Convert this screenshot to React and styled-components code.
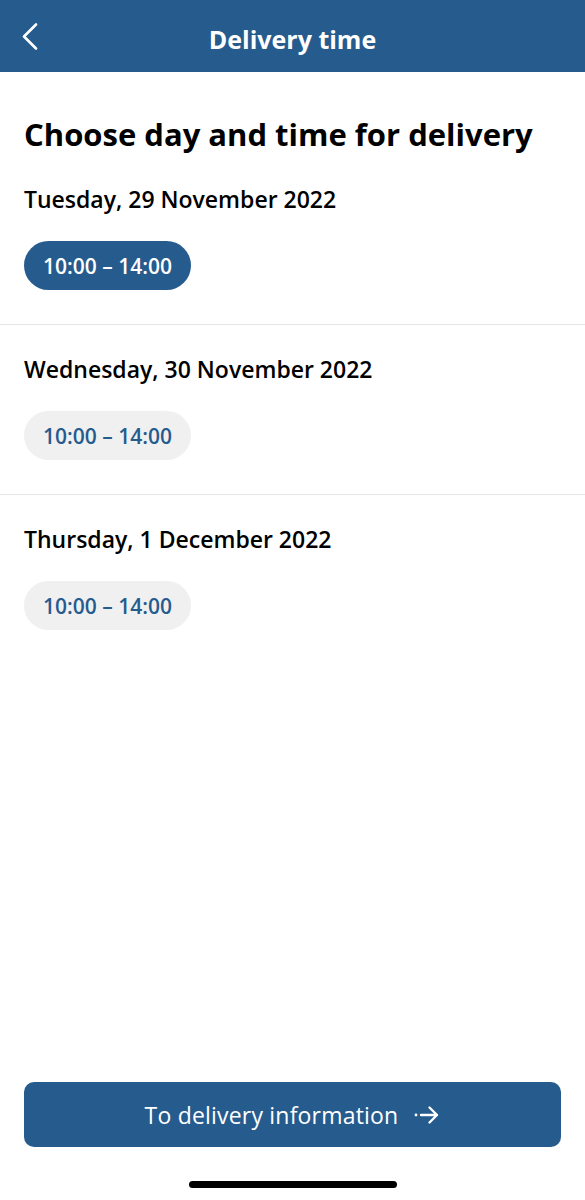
import styled, { createGlobalStyle } from "styled-components";

const GlobalStyle = createGlobalStyle`
  * { box-sizing: border-box; }
  body {
    margin: 0;
    background: #ffffff;
    font-family: "Open Sans", "Lato", sans-serif;
    color: #000;
  }
`;

const Screen = styled.div`
  width: 585px;
  height: 1200px;
  display: flex;
  flex-direction: column;
  background: #fff;
`;

const Header = styled.header`
  height: 72px;
  background: #265b8e;
  display: grid;
  grid-template-columns: 60px 1fr 60px;
  align-items: center;
  color: #fff;
`;

const BackButton = styled.button`
  background: none;
  border: 0;
  padding: 0 0 0 22px;
  height: 40px;
  display: flex;
  align-items: center;
  color: #fff;
  cursor: pointer;
`;

const HeaderTitle = styled.h1`
  margin: 0;
  font-size: 25px;
  font-weight: 700;
  text-align: center;
  padding-top: 6px;
`;

const Content = styled.main`
  flex: 1;
  padding-top: 45px;
`;

const Heading = styled.h2`
  margin: 0 0 4px 24px;
  font-size: 31px;
  line-height: 34px;
  font-weight: 700;
`;

const DaySection = styled.section`
  padding: 32px 0 34px 24px;
  border-bottom: ${(p) => (p.$last ? "none" : "1px solid #e6e6e6")};
`;

const DayTitle = styled.h3`
  margin: 0;
  font-size: 23px;
  line-height: 24px;
  font-weight: 600;
`;

const SlotPill = styled.button`
  margin-top: 30px;
  width: 167px;
  height: 49px;
  border: 0;
  border-radius: 25px;
  font-family: inherit;
  font-size: 21px;
  font-weight: 600;
  background: ${(p) => (p.$active ? "#265b8e" : "#f0f0f0")};
  color: ${(p) => (p.$active ? "#fff" : "#265b8e")};
  display: flex;
  align-items: center;
  justify-content: center;
`;

const Footer = styled.footer`
  padding: 0 24px;
  display: flex;
  flex-direction: column;
  align-items: center;
`;

const PrimaryButton = styled.button`
  width: 537px;
  height: 65px;
  border: 0;
  border-radius: 10px;
  background: #265b8e;
  color: #fff;
  font-family: inherit;
  font-size: 23px;
  letter-spacing: 0.2px;
  font-weight: 500;
  display: flex;
  align-items: center;
  justify-content: center;
  gap: 16px;
`;

const HomeIndicator = styled.div`
  margin: 34px 0 12px;
  width: 208px;
  height: 7px;
  border-radius: 4px;
  background: #000;
`;

const days = [
  { label: "Tuesday, 29 November 2022", active: true },
  { label: "Wednesday, 30 November 2022" },
  { label: "Thursday, 1 December 2022" },
];

export default function App() {
  return (
    <>
      <GlobalStyle />
      <Screen>
        <Header>
          <BackButton aria-label="Back">
            <svg width="16" height="27" viewBox="0 0 16 27" fill="none">
              <path d="M14 1.5 L2 13.5 L14 25.5" stroke="#fff" strokeWidth="2.6" strokeLinecap="round" strokeLinejoin="round" />
            </svg>
          </BackButton>
          <HeaderTitle>Delivery time</HeaderTitle>
          <span />
        </Header>
        <Content>
          <Heading>Choose day and time for delivery</Heading>
          {days.map((d, i) => (
            <DaySection key={d.label} $last={i === days.length - 1}>
              <DayTitle>{d.label}</DayTitle>
              <SlotPill $active={d.active}>10:00 – 14:00</SlotPill>
            </DaySection>
          ))}
        </Content>
        <Footer>
          <PrimaryButton>
            To delivery information
            <svg width="26" height="20" viewBox="0 0 26 20" fill="none">
              <circle cx="2" cy="10" r="1.4" fill="#fff" />
              <path d="M7 10 H23 M15.5 2.5 L23 10 L15.5 17.5" stroke="#fff" strokeWidth="2.4" strokeLinecap="round" strokeLinejoin="round" />
            </svg>
          </PrimaryButton>
          <HomeIndicator />
        </Footer>
      </Screen>
    </>
  );
}
